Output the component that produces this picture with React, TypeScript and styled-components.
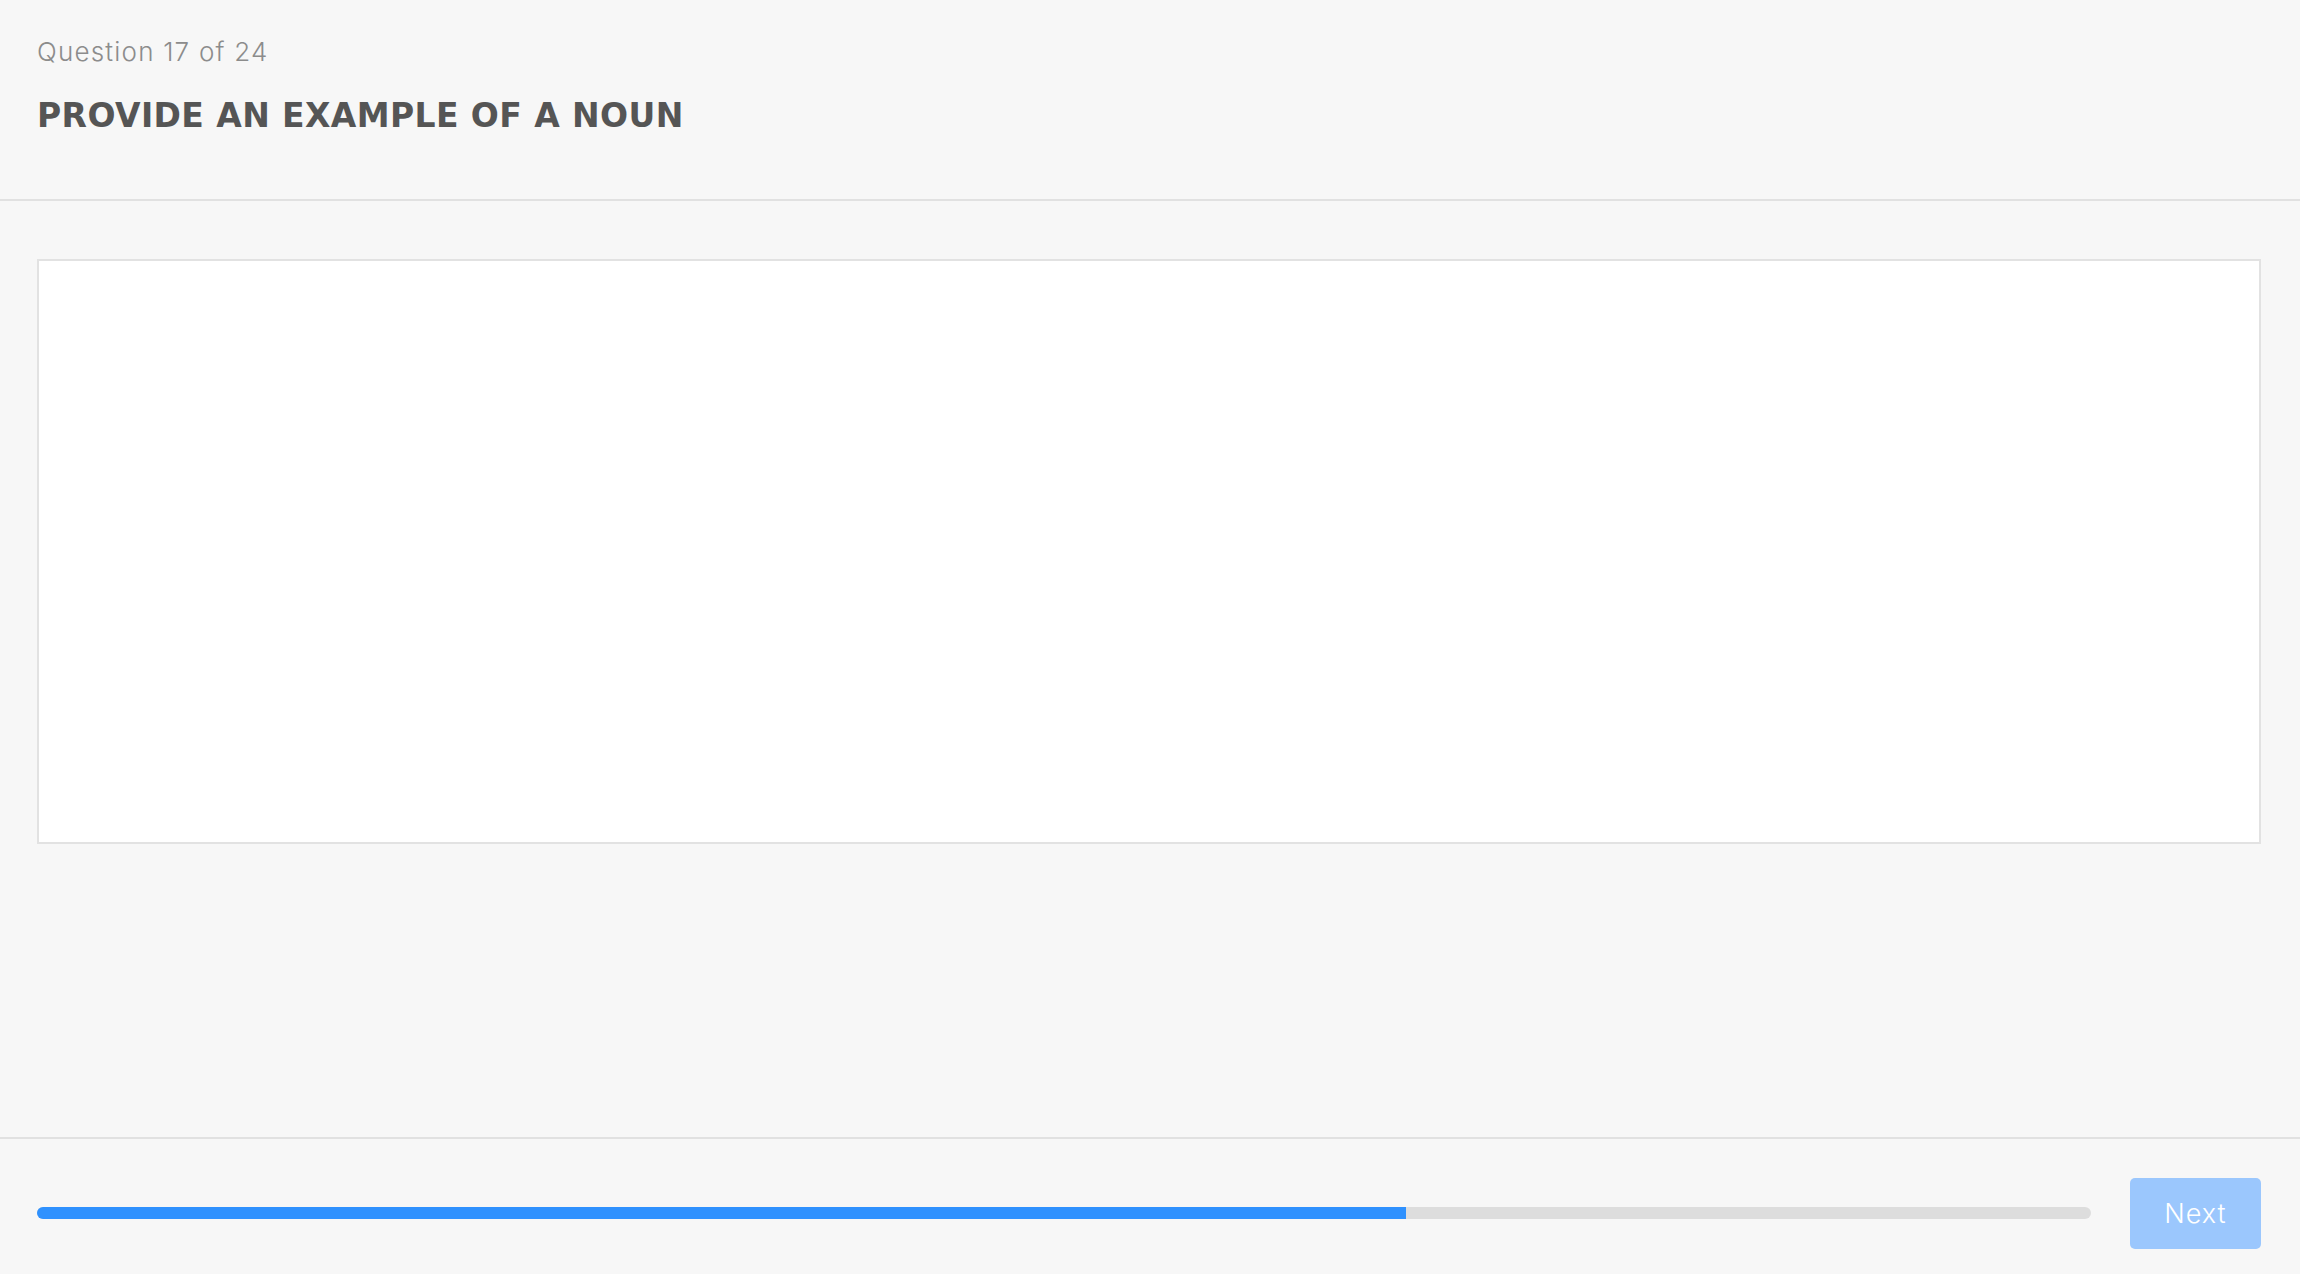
import React from 'react';
import styled, { createGlobalStyle } from 'styled-components';

const GlobalStyle = createGlobalStyle`
  html, body {
    margin: 0;
    padding: 0;
    background: #f7f7f7;
  }
  body {
    font-family: Inter, "Open Sans", "Liberation Sans", sans-serif;
  }
  #root {
    height: 100vh;
  }
`;

const Page = styled.div`
  display: flex;
  flex-direction: column;
  height: 100vh;
  background: #f7f7f7;
  box-sizing: border-box;
`;

const Header = styled.header`
  height: 199px;
  box-sizing: content-box;
  padding: 0 39px 0 37px;
  border-bottom: 2px solid #e1e1e1;
  display: flex;
  flex-direction: column;
`;

const Counter = styled.div`
  margin-top: 36px;
  font-size: 26px;
  line-height: 32px;
  font-weight: 300;
  letter-spacing: 1.2px;
  color: #8c8c8c;
`;

const Title = styled.h1`
  margin: 28px 0 0;
  font-family: "DejaVu Sans", Inter, sans-serif;
  font-size: 33px;
  line-height: 40px;
  font-weight: 700;
  letter-spacing: 0.4px;
  color: #555555;
  text-transform: uppercase;
`;

const Body = styled.main`
  flex: 1;
  padding: 58px 39px 0 37px;
`;

const AnswerBox = styled.textarea`
  display: block;
  width: 100%;
  height: 585px;
  box-sizing: border-box;
  margin: 0;
  padding: 20px;
  border: 2px solid #e2e2e2;
  background: #ffffff;
  resize: none;
  outline: none;
  font-family: inherit;
  font-size: 24px;
  color: #555555;
`;

const Footer = styled.footer`
  height: 137px;
  box-sizing: border-box;
  border-top: 2px solid #e1e1e1;
  padding: 39px 39px 0 37px;
  display: flex;
  align-items: flex-start;
  gap: 39px;
`;

const Track = styled.div`
  flex: 1;
  height: 12px;
  margin-top: 29px;
  border-radius: 6px;
  background: #dddddd;
  overflow: hidden;
`;

const Fill = styled.div`
  height: 100%;
  background: #2f91fe;
`;

const NextButton = styled.button<{ $disabled?: boolean }>`
  width: 131px;
  height: 71px;
  border: none;
  border-radius: 5px;
  background: ${(p) => (p.$disabled ? '#9bc7fd' : '#2f91fe')};
  color: #ffffff;
  font-family: inherit;
  font-size: 27px;
  font-weight: 300;
  letter-spacing: 1px;
  cursor: ${(p) => (p.$disabled ? 'default' : 'pointer')};
`;

const current = 16;
const total = 24;

const App: React.FC = () => {
  const [answer, setAnswer] = React.useState('');
  return (
    <Page>
      <GlobalStyle />
      <Header>
        <Counter>Question {current + 1} of {total}</Counter>
        <Title>Provide an example of a noun</Title>
      </Header>
      <Body>
        <AnswerBox value={answer} onChange={(e) => setAnswer(e.target.value)} />
      </Body>
      <Footer>
        <Track>
          <Fill style={{ width: `${(current / total) * 100}%` }} />
        </Track>
        <NextButton $disabled={!answer}>Next</NextButton>
      </Footer>
    </Page>
  );
};

export default App;
